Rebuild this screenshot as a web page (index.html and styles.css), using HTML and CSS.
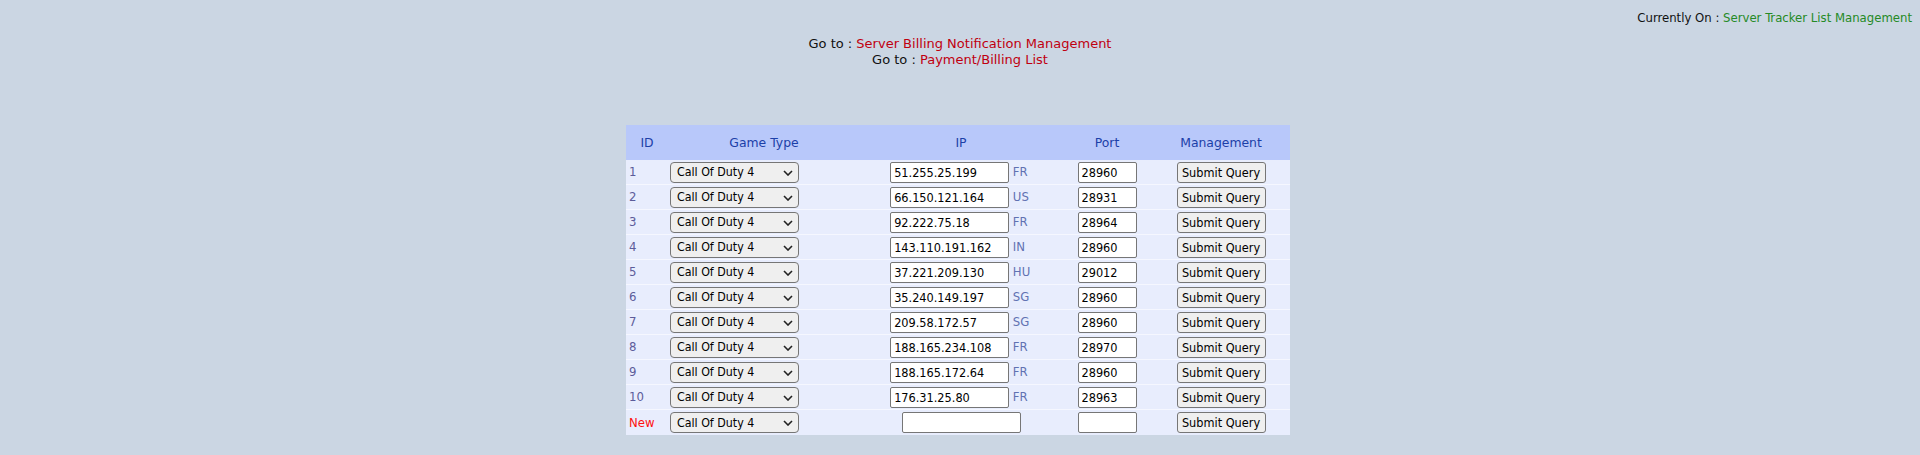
FILE: index.html
```html
<!DOCTYPE html>
<html>
<head>
<meta charset="utf-8">
<title>Server Tracker List Management</title>
<link rel="stylesheet" href="styles.css">
</head>
<body>
<div class="current">Currently On : <span class="green">Server Tracker List Management</span></div>
<div class="nav">
  <div>Go to : <a class="red" href="#">Server Billing Notification Management</a></div>
  <div>Go to : <a class="red" href="#">Payment/Billing List</a></div>
</div>
<table class="list">
  <colgroup>
    <col class="c-id"><col class="c-game"><col class="c-ip"><col class="c-port"><col class="c-mgmt">
  </colgroup>
  <thead>
    <tr><th>ID</th><th>Game Type</th><th>IP</th><th>Port</th><th>Management</th></tr>
  </thead>
  <tbody>
    <tr><td class="id">1</td><td class="game"><span class="selwrap"><select class="sel"><option>Call Of Duty 4</option></select><svg class="chev" width="10" height="6" viewBox="0 0 10 6"><path d="M1 1 L5 5 L9 1" fill="none" stroke="#222" stroke-width="1.6"/></svg></span></td><td class="ip"><input class="ipin" value="51.255.25.199"> <span class="cc">FR</span></td><td class="port"><input class="portin" value="28960"></td><td class="mgmt"><button class="btn">Submit Query</button></td></tr>
    <tr><td class="id">2</td><td class="game"><span class="selwrap"><select class="sel"><option>Call Of Duty 4</option></select><svg class="chev" width="10" height="6" viewBox="0 0 10 6"><path d="M1 1 L5 5 L9 1" fill="none" stroke="#222" stroke-width="1.6"/></svg></span></td><td class="ip"><input class="ipin" value="66.150.121.164"> <span class="cc">US</span></td><td class="port"><input class="portin" value="28931"></td><td class="mgmt"><button class="btn">Submit Query</button></td></tr>
    <tr><td class="id">3</td><td class="game"><span class="selwrap"><select class="sel"><option>Call Of Duty 4</option></select><svg class="chev" width="10" height="6" viewBox="0 0 10 6"><path d="M1 1 L5 5 L9 1" fill="none" stroke="#222" stroke-width="1.6"/></svg></span></td><td class="ip"><input class="ipin" value="92.222.75.18"> <span class="cc">FR</span></td><td class="port"><input class="portin" value="28964"></td><td class="mgmt"><button class="btn">Submit Query</button></td></tr>
    <tr><td class="id">4</td><td class="game"><span class="selwrap"><select class="sel"><option>Call Of Duty 4</option></select><svg class="chev" width="10" height="6" viewBox="0 0 10 6"><path d="M1 1 L5 5 L9 1" fill="none" stroke="#222" stroke-width="1.6"/></svg></span></td><td class="ip"><input class="ipin" value="143.110.191.162"> <span class="cc">IN</span></td><td class="port"><input class="portin" value="28960"></td><td class="mgmt"><button class="btn">Submit Query</button></td></tr>
    <tr><td class="id">5</td><td class="game"><span class="selwrap"><select class="sel"><option>Call Of Duty 4</option></select><svg class="chev" width="10" height="6" viewBox="0 0 10 6"><path d="M1 1 L5 5 L9 1" fill="none" stroke="#222" stroke-width="1.6"/></svg></span></td><td class="ip"><input class="ipin" value="37.221.209.130"> <span class="cc">HU</span></td><td class="port"><input class="portin" value="29012"></td><td class="mgmt"><button class="btn">Submit Query</button></td></tr>
    <tr><td class="id">6</td><td class="game"><span class="selwrap"><select class="sel"><option>Call Of Duty 4</option></select><svg class="chev" width="10" height="6" viewBox="0 0 10 6"><path d="M1 1 L5 5 L9 1" fill="none" stroke="#222" stroke-width="1.6"/></svg></span></td><td class="ip"><input class="ipin" value="35.240.149.197"> <span class="cc">SG</span></td><td class="port"><input class="portin" value="28960"></td><td class="mgmt"><button class="btn">Submit Query</button></td></tr>
    <tr><td class="id">7</td><td class="game"><span class="selwrap"><select class="sel"><option>Call Of Duty 4</option></select><svg class="chev" width="10" height="6" viewBox="0 0 10 6"><path d="M1 1 L5 5 L9 1" fill="none" stroke="#222" stroke-width="1.6"/></svg></span></td><td class="ip"><input class="ipin" value="209.58.172.57"> <span class="cc">SG</span></td><td class="port"><input class="portin" value="28960"></td><td class="mgmt"><button class="btn">Submit Query</button></td></tr>
    <tr><td class="id">8</td><td class="game"><span class="selwrap"><select class="sel"><option>Call Of Duty 4</option></select><svg class="chev" width="10" height="6" viewBox="0 0 10 6"><path d="M1 1 L5 5 L9 1" fill="none" stroke="#222" stroke-width="1.6"/></svg></span></td><td class="ip"><input class="ipin" value="188.165.234.108"> <span class="cc">FR</span></td><td class="port"><input class="portin" value="28970"></td><td class="mgmt"><button class="btn">Submit Query</button></td></tr>
    <tr><td class="id">9</td><td class="game"><span class="selwrap"><select class="sel"><option>Call Of Duty 4</option></select><svg class="chev" width="10" height="6" viewBox="0 0 10 6"><path d="M1 1 L5 5 L9 1" fill="none" stroke="#222" stroke-width="1.6"/></svg></span></td><td class="ip"><input class="ipin" value="188.165.172.64"> <span class="cc">FR</span></td><td class="port"><input class="portin" value="28960"></td><td class="mgmt"><button class="btn">Submit Query</button></td></tr>
    <tr><td class="id">10</td><td class="game"><span class="selwrap"><select class="sel"><option>Call Of Duty 4</option></select><svg class="chev" width="10" height="6" viewBox="0 0 10 6"><path d="M1 1 L5 5 L9 1" fill="none" stroke="#222" stroke-width="1.6"/></svg></span></td><td class="ip"><input class="ipin" value="176.31.25.80"> <span class="cc">FR</span></td><td class="port"><input class="portin" value="28963"></td><td class="mgmt"><button class="btn">Submit Query</button></td></tr>
    <tr class="newrow"><td class="id new">New</td><td class="game"><span class="selwrap"><select class="sel"><option>Call Of Duty 4</option></select><svg class="chev" width="10" height="6" viewBox="0 0 10 6"><path d="M1 1 L5 5 L9 1" fill="none" stroke="#222" stroke-width="1.6"/></svg></span></td><td class="ip"><input class="ipin" value=""></td><td class="port"><input class="portin" value=""></td><td class="mgmt"><button class="btn">Submit Query</button></td></tr>
  </tbody>
</table>
</body>
</html>
```
FILE: styles.css
```css
html, body {
  margin: 0;
  padding: 0;
  background: #cbd6e3;
}
body {
  font-family: "DejaVu Sans Condensed", "DejaVu Sans", sans-serif;
  font-size: 13px;
  color: #111;
  line-height: 16px;
}
.current {
  text-align: right;
  padding: 10px 8px 0 0;
}
.green { color: #258a25; }
.red { color: #c00010; text-decoration: none; }
.nav {
  font-family: "DejaVu Sans", sans-serif;
  text-align: center;
  margin-top: 10px;
}
.list {
  width: 664px;
  margin: 57px 0 0 calc(50% - 334px);
  border-collapse: separate;
  border-spacing: 0;
  table-layout: fixed;
}
.c-id { width: 42px; }
.c-game { width: 192px; }
.c-ip { width: 202px; }
.c-port { width: 90px; }
.c-mgmt { width: 138px; }
.list thead tr {
  background: #b8c8fa;
  height: 35px;
}
.list th {
  font-family: "DejaVu Sans", sans-serif;
  font-size: 12.4px;
  color: #1c40a8;
  font-weight: normal;
  text-align: center;
  padding: 0;
}
.list tbody tr {
  background: #e8edfd;
  height: 25px;
}
.list td {
  padding: 0 2px;
  vertical-align: middle;
  border-bottom: 1px solid #f5f7ff;
}
.list tr.newrow td { border-bottom: 0; }
.id { color: #5c5c9a; text-align: left; }
.list td.id { padding-left: 3px; }
.id.new { color: #ff1010; }
.game { text-align: left; }
.ip, .port, .mgmt { text-align: center; white-space: nowrap; }
.cc { color: #6172b2; display: inline-block; width: 19px; text-align: left; }
.selwrap {
  position: relative;
  display: inline-block;
  vertical-align: middle;
  line-height: 0;
}
.sel {
  -webkit-appearance: none;
  appearance: none;
  width: 129px;
  height: 21px;
  box-sizing: border-box;
  font-family: "DejaVu Sans Condensed", sans-serif;
  font-size: 12.3px;
  color: #000;
  background: #efefef;
  border: 1px solid #767676;
  border-radius: 4px;
  padding: 0 18px 0 6px;
  margin: 0;
}
.chev {
  position: absolute;
  right: 6px;
  top: 8px;
  pointer-events: none;
}
.ipin, .portin {
  height: 21px;
  box-sizing: border-box;
  font-family: "DejaVu Sans Condensed", sans-serif;
  font-size: 12.6px;
  color: #000;
  background: #fff;
  border: 1px solid #767676;
  border-radius: 2px;
  padding: 0 3px;
  vertical-align: middle;
  margin: 0;
}
.ipin { width: 119px; }
.portin { width: 59px; }
.btn {
  width: 89px;
  height: 21px;
  box-sizing: border-box;
  font-family: "DejaVu Sans Condensed", sans-serif;
  font-size: 12.6px;
  color: #000;
  background: #efefef;
  border: 1px solid #767676;
  border-radius: 3px;
  padding: 0;
  margin: 0;
  vertical-align: middle;
}
```
